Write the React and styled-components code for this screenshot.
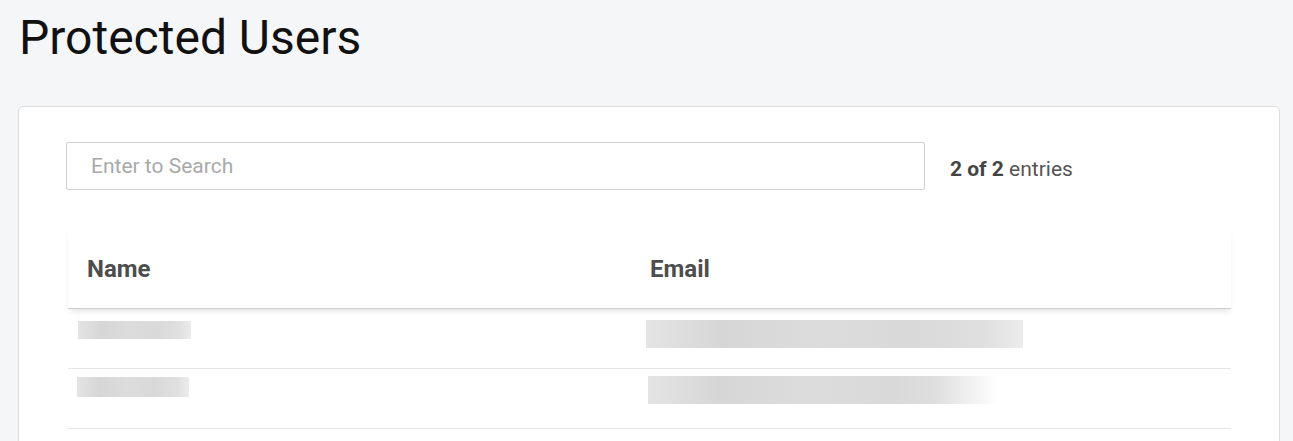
import React from 'react'
import styled, { createGlobalStyle } from 'styled-components'

const GlobalStyle = createGlobalStyle`
  html, body {
    margin: 0;
    padding: 0;
    background: #f5f6f8;
    font-family: Roboto, "Liberation Sans", Arial, sans-serif;
  }
`;

const Page = styled.div`
  padding: 0 13px 0 18px;
  height: 441px;
  overflow: hidden;
`;

const Title = styled.h1`
  margin: 0;
  padding: 10px 0 0 1px;
  font-size: 48px;
  font-weight: 400;
  line-height: 56px;
  color: #111;
`;

const Card = styled.div`
  margin-top: 40px;
  background: #fff;
  border: 1px solid #dcdcdc;
  border-radius: 5px;
  padding: 35px 48px 40px 47px;
  height: 400px;
`;

const Toolbar = styled.div`
  display: flex;
  align-items: center;
  gap: 25px;
`;

const SearchInput = styled.input`
  width: 859px;
  height: 48px;
  box-sizing: border-box;
  border: 1px solid #cfcfcf;
  border-radius: 2px;
  padding: 0 24px;
  font-family: inherit;
  font-size: 21px;
  color: #333;
  outline: none;

  &::placeholder {
    color: #a9a9a9;
  }
`;

const Count = styled.div`
  font-size: 21px;
  color: #555;
  padding-top: 5px;

  b {
    color: #444;
    font-weight: 700;
  }
`;

const Table = styled.div`
  margin: 40px 0 0 2px;
`;

const Row = styled.div`
  display: grid;
  grid-template-columns: 563px 1fr;
  height: ${p => (p.$head ? 79 : 60)}px;
  box-sizing: border-box;
  align-items: ${p => (p.$head ? 'center' : 'start')};
  border-bottom: 1px solid ${p => (p.$head ? '#cfcfcf' : '#e6e6e6')};
  box-shadow: ${p => (p.$head ? '0 4px 6px -2px rgba(0,0,0,0.12)' : 'none')};
  position: relative;
`;

const HeadCell = styled.div`
  padding: 0 19px;
  font-size: 24px;
  font-weight: 700;
  color: #4d4d4d;
`;

const Cell = styled.div`
  padding-top: ${p => p.$top}px;
  padding-left: ${p => p.$left}px;
`;

const Redacted = styled.div`
  width: ${p => p.$w}px;
  height: ${p => p.$h}px;
  background: linear-gradient(
    90deg,
    #e4e4e4 0%,
    #d6d6d6 20%,
    #dcdcdc 45%,
    #d9d9d9 70%,
    ${p => (p.$fade ? '#dedede 82%, rgba(255,255,255,0) 100%' : '#e0e0e0 90%, #ececec 100%')}
  );
`;

const users = [
  { name: [113, 18, 12, 10], email: [377, 28, 11, 15], fade: false },
  { name: [112, 20, 8, 9], email: [350, 28, 7, 17], fade: true },
];

export default function App() {
  return (
    <>
      <GlobalStyle />
      <Page>
        <Title>Protected Users</Title>
        <Card>
          <Toolbar>
            <SearchInput placeholder="Enter to Search" />
            <Count><b>2 of 2</b> entries</Count>
          </Toolbar>
          <Table>
            <Row $head>
              <HeadCell>Name</HeadCell>
              <HeadCell>Email</HeadCell>
            </Row>
            {users.map((u, i) => (
              <Row key={i}>
                <Cell $top={u.name[2]} $left={u.name[3]}>
                  <Redacted $w={u.name[0]} $h={u.name[1]} />
                </Cell>
                <Cell $top={u.email[2]} $left={u.email[3]}>
                  <Redacted $w={u.email[0]} $h={u.email[1]} $fade={u.fade} />
                </Cell>
              </Row>
            ))}
          </Table>
        </Card>
      </Page>
    </>
  )
}
